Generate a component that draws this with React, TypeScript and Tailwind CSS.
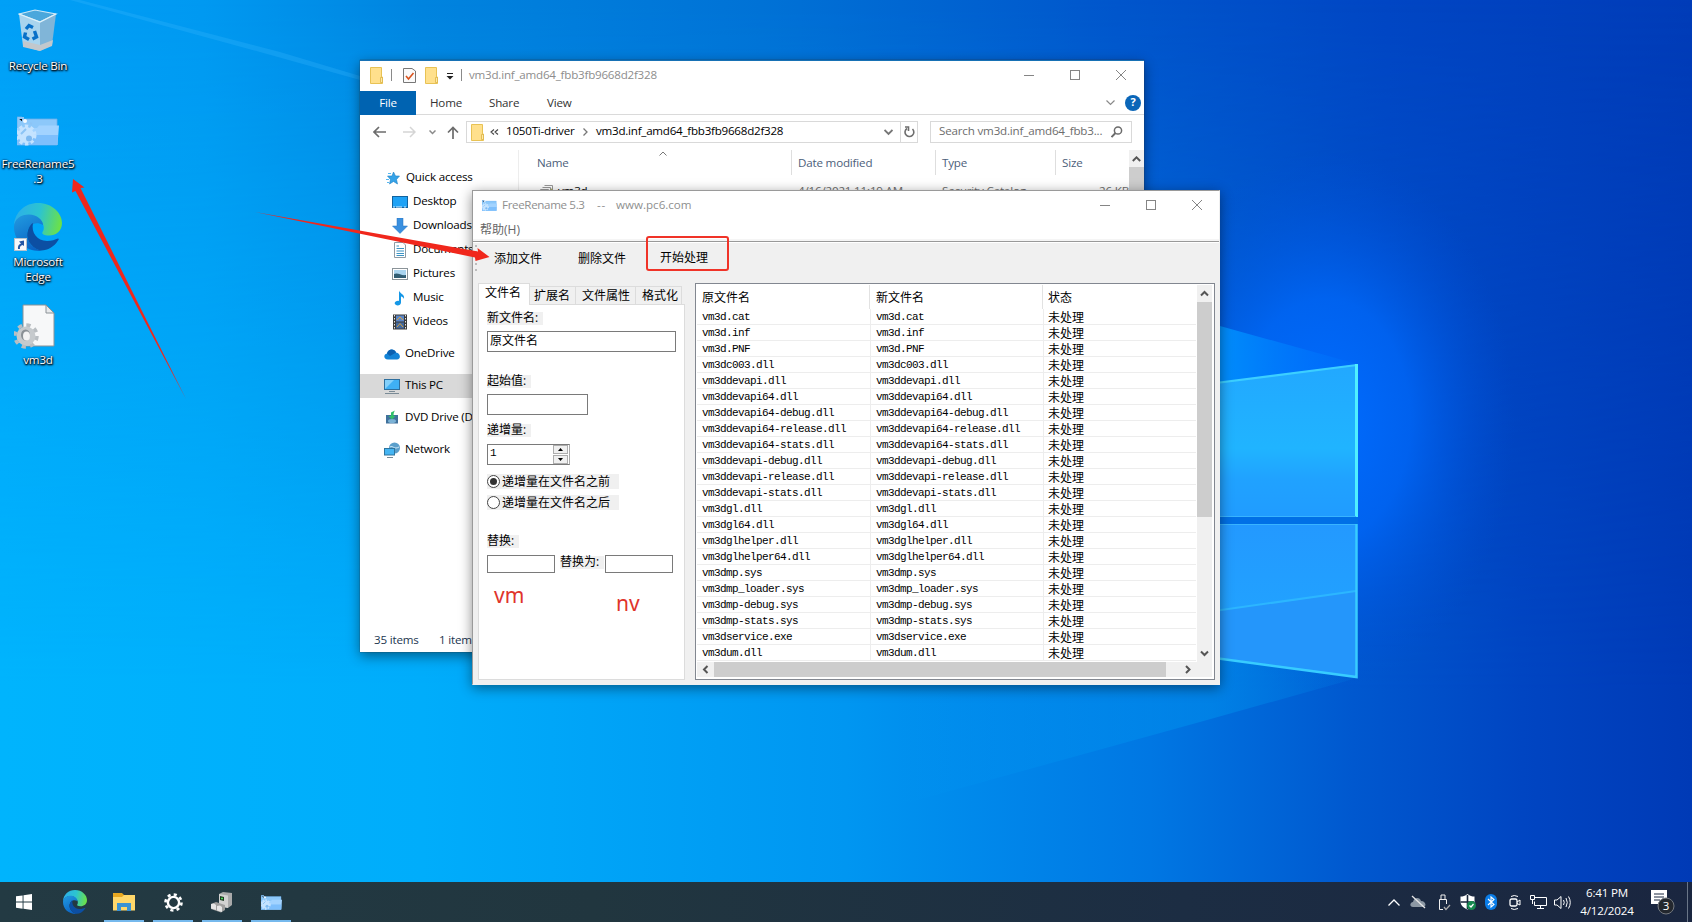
import React from "react";

const files = [
  "vm3d.cat", "vm3d.inf", "vm3d.PNF", "vm3dc003.dll", "vm3ddevapi.dll", "vm3ddevapi64.dll",
  "vm3ddevapi64-debug.dll", "vm3ddevapi64-release.dll", "vm3ddevapi64-stats.dll", "vm3ddevapi-debug.dll",
  "vm3ddevapi-release.dll", "vm3ddevapi-stats.dll", "vm3dgl.dll", "vm3dgl64.dll", "vm3dglhelper.dll",
  "vm3dglhelper64.dll", "vm3dmp.sys", "vm3dmp_loader.sys", "vm3dmp-debug.sys", "vm3dmp-stats.sys",
  "vm3dservice.exe", "vm3dum.dll",
];

function Wallpaper() {
  return (
    <svg className="absolute inset-0" width="1692" height="922" viewBox="0 0 1692 922">
      <defs>
        <linearGradient id="base" x1="0" y1="0" x2="1692" y2="0" gradientUnits="userSpaceOnUse">
          <stop offset="0" stopColor="#00a0f7" />
          <stop offset="0.12" stopColor="#0099f1" />
          <stop offset="0.25" stopColor="#0084df" />
          <stop offset="0.45" stopColor="#0072d6" />
          <stop offset="0.66" stopColor="#0056cc" />
          <stop offset="0.82" stopColor="#0046c4" />
          <stop offset="1" stopColor="#003cb8" />
        </linearGradient>
        <linearGradient id="low" x1="0" y1="0" x2="1692" y2="0" gradientUnits="userSpaceOnUse">
          <stop offset="0" stopColor="#00b4fd" />
          <stop offset="0.25" stopColor="#00adfb" />
          <stop offset="0.5" stopColor="#0096f1" />
          <stop offset="0.68" stopColor="#0077e3" />
          <stop offset="0.8" stopColor="#0058cf" />
          <stop offset="0.9" stopColor="#0045c2" />
          <stop offset="1" stopColor="#003ab6" />
        </linearGradient>
        <linearGradient id="fade" x1="0" y1="0" x2="0" y2="1">
          <stop offset="0" stopColor="#000" />
          <stop offset="0.75" stopColor="#fff" />
        </linearGradient>
        <mask id="fm"><rect width="1692" height="922" fill="url(#fade)" /></mask>
        <radialGradient id="glow">
          <stop offset="0" stopColor="#006cff" stopOpacity="1" />
          <stop offset="0.45" stopColor="#0068fb" stopOpacity="0.75" />
          <stop offset="1" stopColor="#0050d8" stopOpacity="0" />
        </radialGradient>
        <linearGradient id="pane1" x1="0" y1="0" x2="0" y2="1">
          <stop offset="0" stopColor="#22a8ff" />
          <stop offset="0.55" stopColor="#20b4ff" />
          <stop offset="0.75" stopColor="#20a2ff" />
          <stop offset="1" stopColor="#209cff" />
        </linearGradient>
        <linearGradient id="pane2" x1="0" y1="0" x2="0" y2="1">
          <stop offset="0" stopColor="#2399ff" />
          <stop offset="1" stopColor="#20a8ff" />
        </linearGradient>
        <linearGradient id="topbeam" x1="1357" y1="0" x2="1220" y2="0" gradientUnits="userSpaceOnUse">
          <stop offset="0" stopColor="#0074ff" stopOpacity="0.2" />
          <stop offset="1" stopColor="#0093ff" stopOpacity="0.9" />
        </linearGradient>
        <linearGradient id="beam" x1="1357" y1="0" x2="700" y2="0" gradientUnits="userSpaceOnUse">
          <stop offset="0" stopColor="#0090ee" stopOpacity="0.1" />
          <stop offset="0.22" stopColor="#0094ee" stopOpacity="0.5" />
          <stop offset="0.7" stopColor="#00a4f8" stopOpacity="0" />
        </linearGradient>
      </defs>
      <rect width="1692" height="922" fill="url(#base)" />
      <rect width="1692" height="922" fill="url(#low)" mask="url(#fm)" />
      <ellipse cx="1325" cy="420" rx="190" ry="270" fill="url(#glow)" />
      <path d="M80 0L280 52L360 76V80L260 52L70 0Z" fill="#3fbaff" opacity="0.25" />
      <path d="M1357 364L1220 326L1100 290V400H1220Z" fill="url(#topbeam)" />
      <path d="M1357 678L1200 722L700 860V600H1220Z" fill="url(#beam)" />
      <path d="M1200 517H1358V524H1200Z" fill="#0070e6" />
      <path d="M1200 385L1357 364.5V517H1200Z" fill="url(#pane1)" />
      <path d="M1200 524H1357V677L1200 655Z" fill="url(#pane2)" />
      <path d="M1200 613L1356 591V676L1200 655Z" fill="#2496fb" />
      <path d="M1200 613L1356 591" stroke="#2cb6ff" strokeWidth="2" fill="none" />
      <path d="M1200 385L1357 365" stroke="#3ccfff" strokeWidth="2.2" fill="none" />
      <path d="M1356.5 364V517" stroke="#50efff" strokeWidth="3" />
      <path d="M1200 516.500H1356M1200 524.500H1356" stroke="#38b4ff" strokeWidth="1" />
      <path d="M1356.500 524V677L1200 656" stroke="#38ccff" strokeWidth="2.500" fill="none" />
    </svg>
  );
}

function EdgeLogo({ size, id }: { size: number; id: string }) {
  return (
    <svg width={size} height={size} viewBox="0 0 48 48">
      <defs>
        <linearGradient id={id + "a"} x1="2" y1="12" x2="46" y2="22" gradientUnits="userSpaceOnUse">
          <stop offset="0" stopColor="#2cb0e8" />
          <stop offset="0.5" stopColor="#2cc4d0" />
          <stop offset="1" stopColor="#6be04a" />
        </linearGradient>
        <linearGradient id={id + "b"} x1="5" y1="14" x2="22" y2="46" gradientUnits="userSpaceOnUse">
          <stop offset="0" stopColor="#1f95dd" />
          <stop offset="1" stopColor="#0a62c4" />
        </linearGradient>
      </defs>
      <path d="M0 22C1 9 11 0 24 0C38 0 48 10 48 20C48 28 42 32.500 35 32.500C30 32.500 27.500 31 28.500 29C31 26 30 20 25 16C17 9 4 12 0 22Z" fill={`url(#${id}a)`} />
      <path d="M0 24C0 16 7 11.500 15 11.500C23 11.500 29 17 29 22C20 17 13 24 13 31C13 39 19 46 28 47.800C13 49 0 39 0 24Z" fill={`url(#${id}b)`} />
      <path d="M19 20C17 30 23 37.500 33 38C38 38 41 36.500 44 35.500C45 35.500 45 36.500 44 37.500C40 44 33 48 26 47.500C16 44 11 35 14 27C15 24 17 21 19 20Z" fill="#0c4fa3" />
    </svg>
  );
}

function GearFolder({ w, h }: { w: number; h: number }) {
  return (
    <svg width={w} height={h} viewBox="0 0 42 30" preserveAspectRatio="none">
      <path d="M0 1H5L7 3H40V29H0Z" fill="#8cc8fa" stroke="#6badea" strokeWidth="0.800" />
      <path d="M0 12H20L22 9.500H42L40.500 29H0Z" fill="#a2d3ff" />
      <path d="M0 19H41L40.500 29H0Z" fill="#72b8fb" opacity="0.750" />
      <circle cx="9" cy="19" r="8" fill="#c4e3ff" strokeDasharray="3 2.200" stroke="#c4e3ff" strokeWidth="5" />
      <circle cx="12" cy="22.500" r="3" fill="#7db9f0" />
      <path d="M4 18l5-5M1 2h5v4M13 7l2 1" stroke="#8cc4f5" strokeWidth="2" />
      <circle cx="8" cy="5" r="2" fill="#f2faff" />
    </svg>
  );
}

function RecycleBin() {
  return (
    <svg width="40" height="44" viewBox="0 0 40 44">
      <path d="M1 5L17 1L38 5L22 13Z" fill="#4aa7dc" stroke="#cde8f7" strokeWidth="1.200" />
      <path d="M1 5L22 13V42L5 37Z" fill="#a9d4ee" />
      <path d="M38 5L22 13V42L34 36Z" fill="#80b5d8" />
      <path d="M5 32L22 36L35 31L34 37L22 42L5 38Z" fill="#c2c8cd" />
      <path d="M1 5L22 13L38 5" fill="none" stroke="#dff2fb" strokeWidth="1.300" />
      <g fill="none" stroke="#0870c8" strokeWidth="3.400">
        <path d="M8 20L11 16.500L15 18.500" /><path d="M16.500 22L18.500 28L14.500 30" /><path d="M11 30.500L6.500 28L7.500 23.500" />
      </g>
    </svg>
  );
}

function DocGear() {
  return (
    <svg width="42" height="46" viewBox="0 0 42 46">
      <path d="M9 1H32L40 9V42H9Z" fill="#f7f8f9" stroke="#8b9297" strokeWidth="1" />
      <path d="M32 1V9H40Z" fill="#e8eaec" stroke="#8b9297" strokeWidth="1" />
      <circle cx="12" cy="32" r="9.500" fill="#c6cacd" />
      <circle cx="12" cy="32" r="11" fill="none" stroke="#b9bec2" strokeWidth="3.500" strokeDasharray="4.300 4.340" />
      <ellipse cx="11.500" cy="31" rx="4.500" ry="5.500" fill="#8a9095" />
      <ellipse cx="12.500" cy="32" rx="3.500" ry="4.500" fill="#f3f3f3" />
    </svg>
  );
}

function DesktopIcon({ children, label, top, area }: { children: React.ReactNode; label: string[]; top: string; area: string }) {
  return (
    <div className={`absolute left-0 w-[76px] flex flex-col items-center ${top}`}>
      <div className={`flex items-end justify-center ${area}`}>{children}</div>
      {label.map((l) => (
        <div key={l} className="h-[15px] whitespace-nowrap text-[11.6px] leading-[15px] text-white [text-shadow:0_1px_2px_#000,1px_1px_2px_#000,0_0_2px_#003]">{l}</div>
      ))}
    </div>
  );
}

const Folder = () => (
  <svg width="13" height="17" viewBox="0 0 13 17">
    <path d="M.5 .5H11.500V10H12.500V16.500H.5Z" fill="#ffe08c" stroke="#e8c254" />
    <path d="M10.500 10.500H12.500V15.500H10.500Z" fill="#ffe9a8" stroke="#dcb445" strokeWidth=".8" />
  </svg>
);

function WinButtons({ gap }: { gap: string }) {
  return (
    <div className={`flex items-center ${gap}`}>
      <svg width="10" height="10"><path d="M0 5.500H10" stroke="#858585" /></svg>
      <svg width="10" height="10"><rect x=".5" y=".5" width="9" height="9" fill="none" stroke="#858585" /></svg>
      <svg width="10" height="10"><path d="M0 0L10 10M10 0L0 10" stroke="#858585" /></svg>
    </div>
  );
}

const navIcons: Record<string, React.ReactNode> = {
  quick: <><path d="M8.500 2L10.500 6L14.500 6L11.500 9.500L12.500 14L8.500 11.500L4.500 14L5.500 9.500L2.500 6H7Z" fill="#35a3e8" stroke="#1d7fc4" strokeWidth=".6" /><path d="M3 3.500H6M1 9.500H4M2 12.500H4" stroke="#58b8f0" /></>,
  desktop: <><rect x=".5" y="2.500" width="15" height="11" fill="#1fa2f5" stroke="#12639f" /><path d="M1 13H15" stroke="#d9efff" strokeDasharray="2 1 6 2" /></>,
  down: <path d="M5 0H11V8H15.500L8 15.500L.5 8H5Z" fill="#3a90e0" stroke="#2772bd" strokeWidth=".5" />,
  doc: <><path d="M2.500 .5H11L13.500 3V15.500H2.500Z" fill="#fff" stroke="#8e9aa3" /><path d="M4.500 4H7M4.500 6.500H12M4.500 9H12M4.500 11.500H12M4.500 13.500H12" stroke="#3a93c4" /></>,
  pic: <><rect x=".5" y="2.500" width="15" height="11" fill="#fff" stroke="#8b9499" /><rect x="2" y="4" width="12" height="8" fill="#a9d4ef" /><path d="M2 8C6 6 9 10 14 9V12H2Z" fill="#315d73" /></>,
  music: <path d="M7 .5C8 4 13 4 12 9C11.500 7 9 6.500 9 6.500V12.500C9 15 6 16 4 15C1 13.500 4 10 7 11Z" fill="#1597e6" />,
  video: <><rect x="1" y=".5" width="14" height="15" fill="#3a3a3a" /><rect x="4" y="1.500" width="8" height="6" fill="#5b86c8" /><rect x="4" y="8.500" width="8" height="6" fill="#42689e" /><path d="M5 6L8 3L11 6M5 13L8 9.500L11 13" stroke="#d8a33d" fill="none" /><path d="M2.500 1V16M13.500 1V16" stroke="#e8e8e8" strokeDasharray="1.500 1.500" /></>,
  cloud: <><path d="M4 13.500C-1 13.500-.5 8 3 7.500C4 3 10 2 12 6.500C17 7 17 13.500 13 13.500Z" fill="#1383d6" /><path d="M3 7.500C4 3 10 2 12 6.500L6 10Z" fill="#0b60b0" /></>,
  pc: <><rect x=".5" y="1.500" width="15" height="10" fill="#3fb0f5" stroke="#2e6f9e" /><path d="M1 11L10 2H1Z" fill="#83d0fb" /><path d="M5 13.500H11M1 15.500H15" stroke="#7b8b96" /></>,
  dvd: <><path d="M2 5H14V13.500H2Z" fill="#40719c" /><ellipse cx="8" cy="11" rx="4" ry="2" fill="#7bb2d6" /><path d="M11 .5L7 2.500V6H4.500L8 9.500L11.500 6H9.500C9.500 3 10 2 11 .5Z" fill="#2fc068" /></>,
  net: <><circle cx="10.500" cy="6" r="5.500" fill="#5b9fcb" /><path d="M6 5C9 3 10 8 15 5" stroke="#cfe8f6" fill="none" /><rect x=".5" y="6.500" width="10" height="6.500" fill="#45b5f3" stroke="#2f759e" /><path d="M3 15.500H9" stroke="#758894" /></>,
};

const nav: [string, string, string, string][] = [
  ["quick", "Quick access", "pl-[25px]", "h-6"],
  ["desktop", "Desktop", "pl-[32px]", "h-6"],
  ["down", "Downloads", "pl-[32px]", "h-6"],
  ["doc", "Documents", "pl-[32px]", "h-6"],
  ["pic", "Pictures", "pl-[32px]", "h-6"],
  ["music", "Music", "pl-[32px]", "h-6"],
  ["video", "Videos", "pl-[32px]", "h-6 mb-2"],
  ["cloud", "OneDrive", "pl-6", "h-6 mb-2"],
  ["pc", "This PC", "pl-6 bg-[#d9d9d9]", "h-6 mb-2"],
  ["dvd", "DVD Drive (D:)", "pl-6", "h-6 mb-2"],
  ["net", "Network", "pl-6", "h-6"],
];

function Explorer() {
  return (
    <div className="absolute left-[360px] top-[60px] flex h-[592px] w-[784px] flex-col overflow-hidden border-t border-[#1771b5] bg-white text-[11.6px] text-[#1a1a1a] shadow-[0_0_1px_#333,0_4px_12px_rgba(0,0,0,0.45)]">
      <div className="flex h-[30px] shrink-0 items-center pb-[2px] pl-[10px] pr-[18px]">
        <Folder />
        <div className="ml-2 h-3 w-px bg-[#8a8a8a]" />
        <svg className="ml-[11px]" width="13" height="17"><path d="M.5 1.500H9L12.500 4V15.500H.5Z" fill="#fafafa" stroke="#777" /><path d="M3 9L5.500 12L10.500 6" fill="none" stroke="#d9531e" strokeWidth="1.600" /></svg>
        <div className="ml-[9px] flex"><Folder /></div>
        <svg className="ml-2 mt-1" width="8" height="8"><path d="M1 .5H7" stroke="#222" /><path d="M.5 3H7.500L4 6.500Z" fill="#222" /></svg>
        <div className="ml-[7px] h-3 w-px bg-[#8a8a8a]" />
        <div className="ml-[7px] tracking-[-0.22px] text-[#8d8d8d]">vm3d.inf_amd64_fbb3fb9668d2f328</div>
        <div className="ml-auto"><WinButtons gap="gap-[36px]" /></div>
      </div>
      <div className="flex h-[24px] shrink-0 items-center border-b border-[#dadada] text-[#333]">
        <div className="flex h-[24px] w-[56px] items-center justify-center bg-[#0063b1] text-white">File</div>
        <div className="ml-[14px] w-[59px]">Home</div>
        <div className="w-[58px]">Share</div>
        <div>View</div>
        <svg className="ml-auto" width="9" height="6"><path d="M.5 .5L4.500 4.500L8.500 .5" fill="none" stroke="#8a8a8a" strokeWidth="1.200" /></svg>
        <div className="ml-[10px] mr-[3px] flex h-4 w-4 items-center justify-center rounded-full bg-[#0a66b8] text-[11px] font-bold text-white">?</div>
      </div>
      <div className="flex h-[35px] shrink-0 items-center pb-[1px]">
        <svg className="ml-[13px] shrink-0" width="13" height="12"><path d="M13 6H1M6 1L1 6L6 11" fill="none" stroke="#6c6c6c" strokeWidth="1.700" /></svg>
        <svg className="ml-[17px] shrink-0" width="13" height="12"><path d="M0 6H12M7 1L12 6L7 11" fill="none" stroke="#d5d5d5" strokeWidth="1.500" /></svg>
        <svg className="ml-[13px] shrink-0" width="7" height="5"><path d="M.5 .5L3.500 3.500L6.500 .5" fill="none" stroke="#8a8a8a" strokeWidth="1.500" /></svg>
        <svg className="ml-[11px] shrink-0" width="12" height="13"><path d="M6 13V1.500M1 6.500L6 1.500L11 6.500" fill="none" stroke="#6c6c6c" strokeWidth="1.700" /></svg>
        <div className="ml-[7px] flex h-[22px] w-[452px] shrink-0 items-center border border-[#d9d9d9] text-black">
          <div className="ml-1"><Folder /></div>
          <svg className="ml-[6px] mt-[-1px]" width="9" height="6"><path d="M4 .5L1 3L4 5.500M8 .5L5 3L8 5.500" fill="none" stroke="#444" strokeWidth="1.100" /></svg>
          <div className="ml-[7px] w-[77px] whitespace-nowrap pb-[2px] tracking-[-0.22px]">1050Ti-driver</div>
          <svg width="5" height="8"><path d="M.5 .5L4 4L.5 7.500" fill="none" stroke="#777" strokeWidth="1.300" /></svg>
          <div className="ml-[8px] pb-[2px] tracking-[-0.24px]">vm3d.inf_amd64_fbb3fb9668d2f328</div>
          <svg className="ml-auto" width="9" height="7"><path d="M.5 1L4.500 5L8.500 1" fill="none" stroke="#777" strokeWidth="1.900" /></svg>
          <div className="ml-[7px] flex h-5 w-[17px] items-center justify-center border-l border-[#d9d9d9]">
            <svg width="11" height="12"><path d="M3 2.500A4.400 4.400 0 1 0 8.500 3M1 1H4.500V5" fill="none" stroke="#6e6e6e" strokeWidth="1.600" /></svg>
          </div>
        </div>
        <div className="ml-[12px] flex h-[22px] w-[202px] items-center border border-[#d9d9d9] pl-2 pr-2 text-[#6d6d6d]">
          <span className="whitespace-nowrap pb-[2px] tracking-[-0.18px]">Search vm3d.inf_amd64_fbb3...</span>
          <svg className="ml-auto shrink-0" width="12" height="12"><circle cx="7" cy="4.500" r="3.600" fill="none" stroke="#6b6b6b" strokeWidth="1.500" /><path d="M4.500 7L.5 11" stroke="#6b6b6b" strokeWidth="1.900" /></svg>
        </div>
      </div>
      <div className="flex min-h-0 flex-1">
        <div className="w-[158px] shrink-0 pt-[16px] text-black">
          {nav.map(([icon, label, pad, h]) => (
            <div key={label} className={`flex items-center gap-[5px] whitespace-nowrap ${pad} ${h}`}>
              <svg width="16" height="16">{navIcons[icon]}</svg>
              <span className="pb-[2px]">{label}</span>
            </div>
          ))}
        </div>
        <div className="flex flex-1 flex-col border-l border-[#ededed]">
          <div className="flex">
            <div className="flex h-[25px] flex-1 text-[#4c607a]">
              <div className="flex w-[273px] items-center border-r border-[#dedede] pl-[18px]">
                Name
                <svg className="mb-[19px] ml-[90px]" width="8" height="5"><path d="M.5 4.500L4 1L7.500 4.500" fill="none" stroke="#777" /></svg>
              </div>
              <div className="flex w-[144px] items-center border-r border-[#dedede] pl-[6px]">Date modified</div>
              <div className="flex w-[120px] items-center border-r border-[#dedede] pl-[6px]">Type</div>
              <div className="flex items-center pl-[6px]">Size</div>
            </div>
            <div className="mr-px flex h-[17px] w-[15px] items-center justify-center bg-[#f0f0f0]">
              <svg width="9" height="6"><path d="M.8 5L4.500 1.300L8.200 5" fill="none" stroke="#555" strokeWidth="1.900" /></svg>
            </div>
          </div>
          <div className="flex">
            <div className="flex h-[24px] flex-1 items-center whitespace-nowrap pt-[7px] text-[#6d6d6d]">
              <svg className="ml-[20px]" width="16" height="14"><path d="M1.500 5.500H9.500V13H1.500ZM3.500 3.500H11.500V12M5.500 1.500H13.500V12" fill="none" stroke="#999" /><path d="M10 9L13 4V12Z" fill="#a5a838" /></svg>
              <span className="ml-[3px] w-[240px] text-black">vm3d</span>
              <span className="w-[144px]">4/16/2021 11:19 AM</span>
              <span className="w-[157px]">Security Catalog</span>
              <span>26 KB</span>
            </div>
            <div className="mr-px mt-[-8px] h-[300px] w-[15px] bg-[#cdcdcd]" />
          </div>
        </div>
      </div>
      <div className="flex h-[25px] shrink-0 items-center pl-[14px] text-[#22364f]">
        <span className="w-[65px]">35 items</span><span>1 item selected</span>
      </div>
    </div>
  );
}

const Label = ({ children, cls }: { children: React.ReactNode; cls: string }) => (
  <div className={`h-[13px] whitespace-nowrap bg-[#f0f0f0] text-[12px] leading-[12px] ${cls}`}>{children}</div>
);

function Radio({ on, children }: { on?: boolean; children: React.ReactNode }) {
  return (
    <div className="flex h-[15px] w-[132px] items-center gap-[2px] bg-[#f0f0f0] leading-[15px]">
      <svg width="13" height="13"><circle cx="6.500" cy="6.500" r="6" fill="#fff" stroke="#444" />{on && <circle cx="6.500" cy="6.500" r="3.500" fill="#333" />}</svg>
      <span className="whitespace-nowrap">{children}</span>
    </div>
  );
}

function Chevron({ d }: { d: string }) {
  return <svg width="9" height="9"><path d={d} fill="none" stroke="#555" strokeWidth="2" /></svg>;
}

function FileList() {
  return (
    <div className="ml-[10px] h-[397px] w-[520px] border border-[#828790] bg-white p-px">
      <div className="flex h-[377px]">
        <div className="w-[499px]">
          <div className="flex h-[24px] text-[12px]">
            <div className="flex w-[173px] items-center border-r border-[#e2e2e2] pl-[5px] pt-[2px]">原文件名</div>
            <div className="flex w-[173px] items-center border-r border-[#e2e2e2] pl-[6px] pt-[2px]">新文件名</div>
            <div className="flex items-center pl-[5px] pt-[2px]">状态</div>
          </div>
          {files.map((f) => (
            <div key={f} className="flex h-4 border-b border-[#ededed] font-['Liberation_Mono','Noto_Sans_CJK_SC',monospace] text-[11px] leading-[16px] tracking-[-0.6px] text-black">
              <div className="w-[174px] border-r border-[#ededed] pl-[5px]">{f}</div>
              <div className="w-[173px] border-r border-[#ededed] pl-[5px]">{f}</div>
              <div className="pl-[4px] font-['Noto_Sans_CJK_SC',sans-serif] text-[12px] leading-[15px] tracking-normal">未处理</div>
            </div>
          ))}
        </div>
        <div className="ml-[1px] flex w-[15px] flex-col items-center bg-[#f0f0f0]">
          <div className="flex h-[17px] items-center"><Chevron d="M1 6.500L4.500 3L8 6.500" /></div>
          <div className="h-[215px] w-full bg-[#cdcdcd]" />
          <div className="mt-auto flex h-[17px] items-center"><Chevron d="M1 2.500L4.500 6L8 2.500" /></div>
        </div>
      </div>
      <div className="flex h-[15px] w-[515px] items-center bg-[#f0f0f0]">
        <div className="flex w-[17px] justify-center"><Chevron d="M6.500 1L3 4.500L6.500 8" /></div>
        <div className="h-full w-[452px] bg-[#cdcdcd]" />
        <div className="ml-[17px]"><Chevron d="M3 1L6.500 4.500L3 8" /></div>
      </div>
    </div>
  );
}

function Renamer() {
  return (
    <div className="absolute left-[472px] top-[190px] flex h-[495px] w-[748px] flex-col border border-[#9a9a9a] border-b-[#f0f0f0] border-r-[#f0f0f0] bg-[#f0f0f0] text-[12px] tracking-normal text-black shadow-[0_3px_12px_rgba(0,0,0,0.45)]">
      <div className="flex h-[30px] shrink-0 items-center bg-white pb-[2px] pl-[9px] pr-[17px] text-[11.6px] text-[#8f8f8f]">
        <GearFolder w={15} h={11} />
        <span className="ml-[5px] w-[95px] tracking-[-0.35px]">FreeRename 5.3</span>
        <span className="w-[19px] tracking-[0.8px]">--</span>
        <span>www.pc6.com</span>
        <div className="ml-auto"><WinButtons gap="gap-[36px]" /></div>
      </div>
      <div className="flex h-[18px] shrink-0 items-center bg-white pl-[7px] text-[12px] text-[#666]">帮助(H)</div>
      <div className="h-[2px] shrink-0 bg-[#f5f5f5]" />
      <div className="h-px shrink-0 bg-[#999]" />
      <div className="h-px shrink-0 bg-white" />
      <div className="flex h-[35px] shrink-0 items-center pb-[3px]">
        <svg width="8" height="30"><path d="M3 1V30" stroke="#aaa" strokeWidth="1.500" strokeDasharray="2 4" /></svg>
        <span className="ml-[13px] w-[84px]">添加文件</span>
        <span className="w-[68px]">删除文件</span>
        <div className="mt-[-11px] flex h-[35px] w-[83px] items-center rounded-[3px] border-[2.5px] border-[#f03328] pl-[12px] pt-[9px]">开始处理</div>
      </div>
      <div className="flex pl-[5px] pt-[5px]">
        <div className="w-[207px]">
          <div className="flex h-[21px] items-end leading-[18px]">
            <div className="z-10 h-[22px] w-[52px] self-start border border-b-0 border-[#dcdcdc] bg-white pl-[6px]">文件名</div>
            <div className="h-[18px] w-[46px] border-r border-t border-[#dcdcdc] pl-1">扩展名</div>
            <div className="h-[18px] w-[60px] border-r border-t border-[#dcdcdc] pl-[6px]">文件属性</div>
            <div className="h-[18px] w-[46px] border-r border-t border-[#dcdcdc] pl-[6px]">格式化</div>
          </div>
          <div className="flex h-[376px] flex-col border border-[#dcdcdc] bg-white pl-2 pt-[7px]">
            <Label cls="w-[56px]">新文件名:</Label>
            <div className="mt-[6px] h-[21px] w-[189px] border border-[#7a7a7a] pl-[2px] leading-[17px]">原文件名</div>
            <Label cls="mt-[23px] w-[44px]">起始值:</Label>
            <div className="mt-[6px] h-[21px] w-[101px] border border-[#7a7a7a]" />
            <Label cls="mt-[9px] w-[44px]">递增量:</Label>
            <div className="mt-[7px] flex h-[21px] w-[83px] justify-between border border-[#7a7a7a] border-r-[#aaa] pl-[2px] pr-px font-['Liberation_Mono',monospace] text-[11px] leading-[17px]">
              1
              <div className="flex flex-col items-center justify-center gap-[1px]">
                <div className="flex h-[9px] w-[15px] items-center justify-center border border-[#adadad] bg-[#f0f0f0]"><svg width="5" height="3"><path d="M0 3L2.500 0L5 3Z" /></svg></div>
                <div className="flex h-[9px] w-[15px] items-center justify-center border border-[#adadad] bg-[#f0f0f0]"><svg width="5" height="3"><path d="M0 0H5L2.500 3Z" /></svg></div>
              </div>
            </div>
            <div className="mt-[9px] flex flex-col gap-[6px]">
              <Radio on>递增量在文件名之前</Radio>
              <Radio>递增量在文件名之后</Radio>
            </div>
            <Label cls="mt-[25px] w-[32px]">替换:</Label>
            <div className="mt-[7px] flex">
              <div className="h-[18px] w-[68px] border border-[#7a7a7a]" />
              <Label cls="ml-[5px] mr-[1px] mt-px w-[44px]">替换为:</Label>
              <div className="h-[18px] w-[68px] border border-[#7a7a7a]" />
            </div>
            <div className="flex pl-[7px] pt-[7px] font-['Noto_Sans',sans-serif] text-[21px] leading-[30px] text-[#e0342b]">
              <span className="w-[122px]">vm</span>
              <span className="mt-[8px]">nv</span>
            </div>
          </div>
        </div>
        <FileList />
      </div>
    </div>
  );
}

function TaskApp({ active, children }: { active?: boolean; children: React.ReactNode }) {
  return (
    <div className={`flex h-10 w-10 items-center justify-center border-b-2 pt-0.5 ${active ? "border-[#76b9ed]" : "border-transparent"}`}>{children}</div>
  );
}

function Taskbar() {
  return (
    <div className="absolute bottom-0 left-0 flex h-10 w-full items-center bg-[linear-gradient(90deg,#233a43,#21363f_35%,#1c2d43_70%,#1a2640)] text-white">
      <div className="ml-1 flex items-center gap-[9px]">
        <TaskApp><svg width="16" height="16"><path d="M0 2.300L6.600 1.400V7.600H0ZM7.500 1.300L16 0V7.600H7.500ZM0 8.500H6.600V14.700L0 13.800ZM7.500 8.500H16V16L7.500 14.800Z" fill="#fff" /></svg></TaskApp>
        <div className="ml-[2px]"><TaskApp><EdgeLogo size={24} id="t" /></TaskApp></div>
        <div className="flex gap-[9px]">
          <TaskApp active><svg width="22" height="18"><path d="M0 0H9L11 2H21V17H0Z" fill="#e8a820" /><path d="M0 4H9L11 2H22V17.500H0Z" fill="#ffd76a" /><path d="M4 18V10H18V18H14V14H8V18Z" fill="#3a92d4" /></svg></TaskApp>
          <TaskApp active><svg width="19" height="19"><circle cx="9.500" cy="9.500" r="5.600" fill="none" stroke="#fff" strokeWidth="2.400" /><circle cx="9.500" cy="9.500" r="8" fill="none" stroke="#fff" strokeWidth="2.600" strokeDasharray="3.100 3.180" /></svg></TaskApp>
          <TaskApp active>
            <svg width="22" height="21">
              <path d="M8 2L12 0L21 1V13L17 16L8 14Z" fill="#a9aaab" />
              <path d="M8 2L17 3.500V16L8 14Z" fill="#d2d2d2" />
              <path d="M9 4L13 5V9L9 8Z" fill="#1c3b22" />
              <path d="M10 6.500H12" stroke="#4fe060" strokeWidth="1.500" />
              <path d="M0 12L5 10L14 13V18L10 20.500L0 17Z" fill="#9f9f9f" />
              <path d="M0 12L3 11.500L5 13V18L0 16.500ZM6 14L9 13.500L11 15V20L6 18.500Z" fill="#e5e5e5" />
            </svg>
          </TaskApp>
          <TaskApp active><GearFolder w={21} h={15} /></TaskApp>
        </div>
      </div>
      <div className="ml-auto flex items-center">
        <svg width="12" height="7"><path d="M.5 6.500L6 1L11.500 6.500" fill="none" stroke="#fff" strokeWidth="1.300" /></svg>
        <svg className="ml-[10px]" width="16" height="14"><path d="M3 12C-1 12 0 7 3 7C4 2 10 2 11 6C16 6 17 12 13 12Z" fill="#8c98a4" /><path d="M2 1L15 13" stroke="#e6e6e6" strokeWidth="1.300" /></svg>
        <svg className="ml-[11px]" width="14" height="17"><path d="M2.500 5.500H9.500V10M2.500 5.500V15.500H6M4 5V1H8V5" fill="none" stroke="#f0f0f0" /><path d="M7 13L9 15.500L13 11" fill="none" stroke="#aaa" strokeWidth="1.300" /></svg>
        <svg className="ml-[9px]" width="16" height="16"><path d="M7.500 0C10 2 12 2.500 14.500 2.500V8C14 12 11 14 7.500 15.500C4 14 1 12 .5 8V2.500C3 2.500 5 2 7.500 0Z" fill="#fff" /><path d="M7.500 1V15M.5 8H14" stroke="#17263a" strokeWidth="1.600" /><circle cx="11.500" cy="11.500" r="4.500" fill="#168a4f" /><path d="M9.500 11.500L11 13L13.500 10" fill="none" stroke="#fff" strokeWidth="1.200" /></svg>
        <svg className="ml-[9px]" width="12" height="16"><rect width="12" height="16" rx="6" fill="#0a7de8" /><path d="M3 5L9 10.500L6 13V3L9 5.500L3 11" fill="none" stroke="#fff" strokeWidth="1.100" /></svg>
        <svg className="ml-[12px]" width="12" height="17"><rect x="1" y="5" width="7" height="7" rx="1.500" fill="none" stroke="#fff" strokeWidth="1.300" /><path d="M8 8L11 6V11L8 9.500M2 2.500Q5 .5 9 2.500M2 14.500Q5 16.500 9 14.500" fill="none" stroke="#fff" /></svg>
        <svg className="ml-[9px]" width="17" height="15"><path d="M5 2.500H16.500V10.500H4.500V6.500M10.500 10.500V13.500M7 13.500H14M.5 .5H4.500V4.500H.5ZM2.500 4.500V9" fill="none" stroke="#fff" /></svg>
        <svg className="ml-[7px]" width="18" height="15"><path d="M.5 5H3L7 1.500V13.500L3 10H.5Z" fill="none" stroke="#fff" /><path d="M9.500 5Q11 7.500 9.500 10M12 3Q14.500 7.500 12 12M14.500 1.500Q18 7.500 14.500 13.500" fill="none" stroke="#fff" /></svg>
        <div className="ml-[8px] w-[54px] pb-px text-center text-[11.600px] leading-[18px]"><div>6:41 PM</div><div className="whitespace-nowrap">4/12/2024</div></div>
        <svg className="ml-[16px]" width="26" height="26"><path d="M1 1H17V15H12L8 19V15H1Z" fill="#fff" /><path d="M4 5H14M4 8H14M4 11H10" stroke="#1b2840" strokeWidth="1.200" /><circle cx="16" cy="17" r="8" fill="#23272e" stroke="#74797f" /><text x="16" y="21" fontSize="11.500" fill="#fff" textAnchor="middle">3</text></svg>
        <div className="ml-[11px] mr-1 h-10 w-px bg-[#6a7688]" />
      </div>
    </div>
  );
}

export default function App() {
  return (
    <div className="relative h-[922px] w-[1692px] overflow-hidden font-['Open_Sans','Noto_Sans_CJK_SC',sans-serif] tracking-[-0.18px]">
      <Wallpaper />
      <DesktopIcon top="top-[9px]" area="h-[49px] pb-[5px]" label={["Recycle Bin"]}><RecycleBin /></DesktopIcon>
      <DesktopIcon top="top-[106px]" area="h-[50px] pb-[10px]" label={["FreeRename5", ".3"]}><GearFolder w={42} h={30} /></DesktopIcon>
      <DesktopIcon top="top-[203px]" area="h-[51px] pb-[3px]" label={["Microsoft", "Edge"]}>
        <div className="relative">
          <EdgeLogo size={48} id="d" />
          <svg className="absolute bottom-0 left-0" width="13" height="13"><rect x=".5" y=".5" width="12" height="12" fill="#f6f8fa" stroke="#b5c1cc" /><path d="M4 11C3.500 8 5 6 7 5.500L5 3.500L10 2.500V8L8.500 7C6 8 5.500 9 6 11Z" fill="#2456a4" /></svg>
        </div>
      </DesktopIcon>
      <DesktopIcon top="top-[302px]" area="h-[50px] pb-[2px] pr-[6px]" label={["vm3d"]}><DocGear /></DesktopIcon>
      <Explorer />
      <Renamer />
      <svg className="absolute inset-0 z-20" width="1692" height="922">
        <path d="M73 179L84.500 187.500L80.500 188L186 399L75.500 191L72 192.500Z" fill="#f0271c" />
        <path d="M489.500 257L477.500 248L478 251.500L255 212L475 257.500L475.500 261Z" fill="#f0271c" />
      </svg>
      <Taskbar />
    </div>
  );
}
